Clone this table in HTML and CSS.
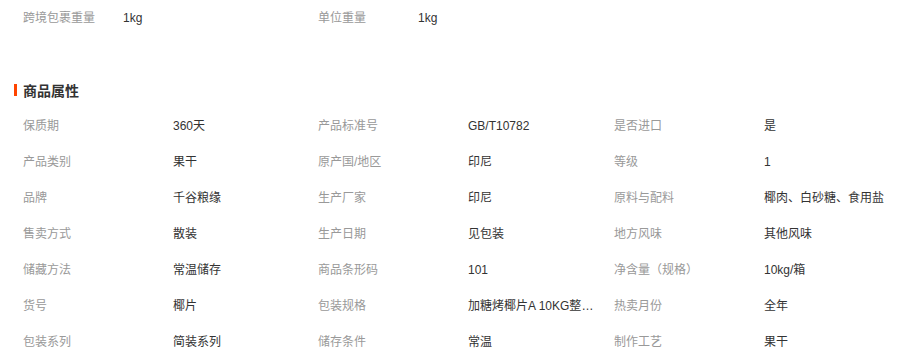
FILE: index.html
```html
<!DOCTYPE html>
<html lang="zh-CN">
<head>
    <meta charset="UTF-8">
    <title>商品属性</title>
    <link rel="stylesheet" href="styles.css">
</head>
<body>
    <div class="weight-row">
        <div class="weight-item">
            <span class="weight-label">跨境包裹重量</span>
            <span class="weight-value">1kg</span>
        </div>
        <div class="weight-item">
            <span class="weight-label">单位重量</span>
            <span class="weight-value">1kg</span>
        </div>
    </div>

    <h3 class="section-title">商品属性</h3>

    <div class="attr-grid">
        <div class="attr-label">保质期</div><div class="attr-value">360天</div>
        <div class="attr-label">产品标准号</div><div class="attr-value">GB/T10782</div>
        <div class="attr-label">是否进口</div><div class="attr-value">是</div>

        <div class="attr-label">产品类别</div><div class="attr-value">果干</div>
        <div class="attr-label">原产国/地区</div><div class="attr-value">印尼</div>
        <div class="attr-label">等级</div><div class="attr-value">1</div>

        <div class="attr-label">品牌</div><div class="attr-value">千谷粮缘</div>
        <div class="attr-label">生产厂家</div><div class="attr-value">印尼</div>
        <div class="attr-label">原料与配料</div><div class="attr-value">椰肉、白砂糖、食用盐</div>

        <div class="attr-label">售卖方式</div><div class="attr-value">散装</div>
        <div class="attr-label">生产日期</div><div class="attr-value">见包装</div>
        <div class="attr-label">地方风味</div><div class="attr-value">其他风味</div>

        <div class="attr-label">储藏方法</div><div class="attr-value">常温储存</div>
        <div class="attr-label">商品条形码</div><div class="attr-value">101</div>
        <div class="attr-label">净含量（规格）</div><div class="attr-value">10kg/箱</div>

        <div class="attr-label">货号</div><div class="attr-value">椰片</div>
        <div class="attr-label">包装规格</div><div class="attr-value">加糖烤椰片A 10KG整箱装</div>
        <div class="attr-label">热卖月份</div><div class="attr-value">全年</div>

        <div class="attr-label">包装系列</div><div class="attr-value">简装系列</div>
        <div class="attr-label">储存条件</div><div class="attr-value">常温</div>
        <div class="attr-label">制作工艺</div><div class="attr-value">果干</div>
    </div>
</body>
</html>
```

FILE: styles.css
```css
body {
    margin: 0;
    font-family: 'Liberation Sans', 'Noto Sans CJK SC', sans-serif;
    font-size: 12px;
    color: #333;
    background: #fff;
}

/* weight line at the top */
.weight-row {
    display: flex;
    padding-left: 23px;
    height: 36px;
    line-height: 36px;
}

.weight-item {
    display: flex;
    width: 295px;
}

.weight-label {
    width: 100px;
    color: #999;
}

.weight-value {
    color: #333;
}

/* section header with the orange marker */
.section-title {
    display: flex;
    align-items: center;
    margin: 44px 0 8px 14px;
    height: 20px;
    font-size: 14px;
    font-weight: bold;
    color: #333;
}

.section-title::before {
    content: "";
    width: 3px;
    height: 12px;
    margin-right: 6px;
    background: #ff4400;
}

/* attribute table */
.attr-grid {
    display: grid;
    grid-template-columns: 150px 145px 150px 146px 150px 1fr;
    grid-auto-rows: 36px;
    padding-left: 23px;
    line-height: 36px;
}

.attr-label {
    color: #999;
    white-space: nowrap;
}

.attr-value {
    color: #333;
    padding-right: 12px;
    white-space: nowrap;
    overflow: hidden;
    text-overflow: ellipsis;
}
```
